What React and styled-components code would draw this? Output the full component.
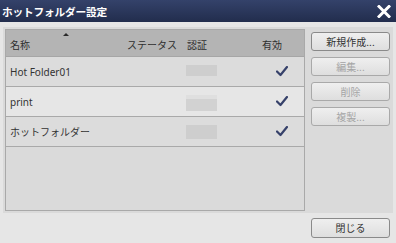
import React from "react";
import styled, { createGlobalStyle } from "styled-components";

const Global = createGlobalStyle`
  html, body { margin: 0; padding: 0; background: #e6e6e6; }
  body { font-family: "Noto Sans", "Noto Sans CJK JP", sans-serif; }
`;

const Dialog = styled.div`
  width: 396px;
  height: 243px;
  background: #e6e6e6;
  display: flex;
  flex-direction: column;
  overflow: hidden;
`;

const TitleBar = styled.div`
  height: 22px;
  flex: none;
  background: linear-gradient(#34426a, #222d4d);
  display: flex;
  align-items: center;
  justify-content: space-between;
  padding: 0 5px 0 2px;
  box-sizing: border-box;
`;

const Title = styled.div`
  color: #fff;
  font-weight: bold;
  font-size: 10.7px;
  font-family: "Noto Sans CJK JP", sans-serif;
  letter-spacing: -0.2px;
`;

const CloseIcon = styled.svg`
  width: 14px;
  height: 13px;
  display: block;
`;

const Content = styled.div`
  padding: 5px 3px 0 3px;
`;

const Panel = styled.div`
  height: 186px;
  box-sizing: border-box;
  background: #dadada;
  padding: 2px;
  display: flex;
  align-items: flex-start;
`;

const Table = styled.div`
  width: 300px;
  height: 182px;
  box-sizing: border-box;
  border: 1px solid #a9a9a9;
  background: #dadada;
  display: flex;
  flex-direction: column;
`;

const cols = "120px 58px 72px 1fr";

const HeaderRow = styled.div`
  display: grid;
  grid-template-columns: ${cols};
  height: 27px;
  background: #b4b4b4;
  border-bottom: 1px solid #a6a6a6;
  align-items: center;
  font-family: "Noto Sans CJK JP", sans-serif;
  font-size: 10px;
  color: #2e2e2e;
  padding-top: 3px;
  box-sizing: border-box;
`;

const HeadCell = styled.div`
  position: relative;
  padding-left: ${(p) => p.$pl}px;
  align-self: stretch;
  display: flex;
  align-items: center;
`;

const SortArrow = styled.div`
  position: absolute;
  left: 57px;
  top: 0px;
  width: 0;
  height: 0;
  border-left: 3px solid transparent;
  border-right: 3px solid transparent;
  border-bottom: 3px solid #2a2a2a;
`;

const Row = styled.div`
  display: grid;
  grid-template-columns: ${cols};
  height: 30px;
  box-sizing: border-box;
  border-bottom: 1px solid #a9a9a9;
  background: ${(p) => (p.$alt ? "#e6e6e6" : "#dcdcdc")};
  align-items: center;
  font-size: 10px;
  color: #333;
  font-family: "Noto Sans", "Noto Sans CJK JP", sans-serif;
`;

const Cell = styled.div`
  padding-left: ${(p) => p.$pl}px;
  display: flex;
  align-items: center;
  justify-content: ${(p) => (p.$center ? "center" : "flex-start")};
`;

const Placeholder = styled.div`
  width: 31px;
  height: ${(p) => p.$h}px;
  margin-top: ${(p) => p.$mt}px;
  background: ${(p) => p.$bg};
`;

const Check = styled.svg`
  width: 12px;
  height: 11px;
  display: block;
  margin-left: 4px;
`;

const Side = styled.div`
  margin-left: 6px;
  padding-top: 3px;
  display: flex;
  flex-direction: column;
  gap: 6px;
`;

const Button = styled.button`
  width: 79px;
  height: ${(p) => (p.$tall ? 20 : 19)}px;
  box-sizing: border-box;
  border: 1px solid ${(p) => (p.disabled ? "#a9a9a9" : "#8a8a8a")};
  border-radius: 3px;
  background: linear-gradient(#efefef, #dedede);
  color: ${(p) => (p.disabled ? "#a5a5a5" : "#333")};
  font-family: "Noto Sans CJK JP", sans-serif;
  font-size: 10px;
  padding: 0;
  line-height: 1;
  display: flex;
  align-items: center;
  justify-content: center;
`;

const Footer = styled.div`
  display: flex;
  justify-content: flex-end;
  padding: 5px 6px 0 0;
`;

const CheckMark = () => (
  <Check viewBox="0 0 12 11">
    <path d="M1 5.5 L4.5 9 L11 1" fill="none" stroke="#36416a" strokeWidth="2.2" strokeLinecap="round" strokeLinejoin="round" />
  </Check>
);

const rows = [
  { name: "Hot Folder01", ph: { h: 11, mt: -2, bg: "#cecece" } },
  { name: "print", alt: true, ph: { h: 16, mt: 2, bg: "linear-gradient(#dfdfdf 0 4px, #d2d2d2 4px)" } },
  { name: "ホットフォルダー", ph: { h: 14, mt: 1, bg: "#cecece" } },
];

export default function App() {
  return (
    <Dialog>
      <Global />
      <TitleBar>
        <Title>ホットフォルダー設定</Title>
        <CloseIcon viewBox="0 0 14 13">
          <path d="M2 1.5 L12 11.5 M12 1.5 L2 11.5" stroke="#fff" strokeWidth="3" strokeLinecap="square" />
        </CloseIcon>
      </TitleBar>
      <Content>
        <Panel>
          <Table>
            <HeaderRow>
              <HeadCell $pl={4}>
                名称
                <SortArrow />
              </HeadCell>
              <HeadCell $pl={1}>ステータス</HeadCell>
              <HeadCell $pl={3}>認証</HeadCell>
              <HeadCell $pl={6}>有効</HeadCell>
            </HeaderRow>
            {rows.map((r) => (
              <Row key={r.name} $alt={r.alt}>
                <Cell $pl={4}>{r.name}</Cell>
                <Cell $pl={0} />
                <Cell $pl={2}>
                  <Placeholder $h={r.ph.h} $mt={r.ph.mt} $bg={r.ph.bg} />
                </Cell>
                <Cell $pl={0} $center>
                  <CheckMark />
                </Cell>
              </Row>
            ))}
          </Table>
          <Side>
            <Button>新規作成...</Button>
            <Button disabled>編集...</Button>
            <Button disabled>削除</Button>
            <Button disabled>複製...</Button>
          </Side>
        </Panel>
      </Content>
      <Footer>
        <Button $tall>閉じる</Button>
      </Footer>
    </Dialog>
  );
}
